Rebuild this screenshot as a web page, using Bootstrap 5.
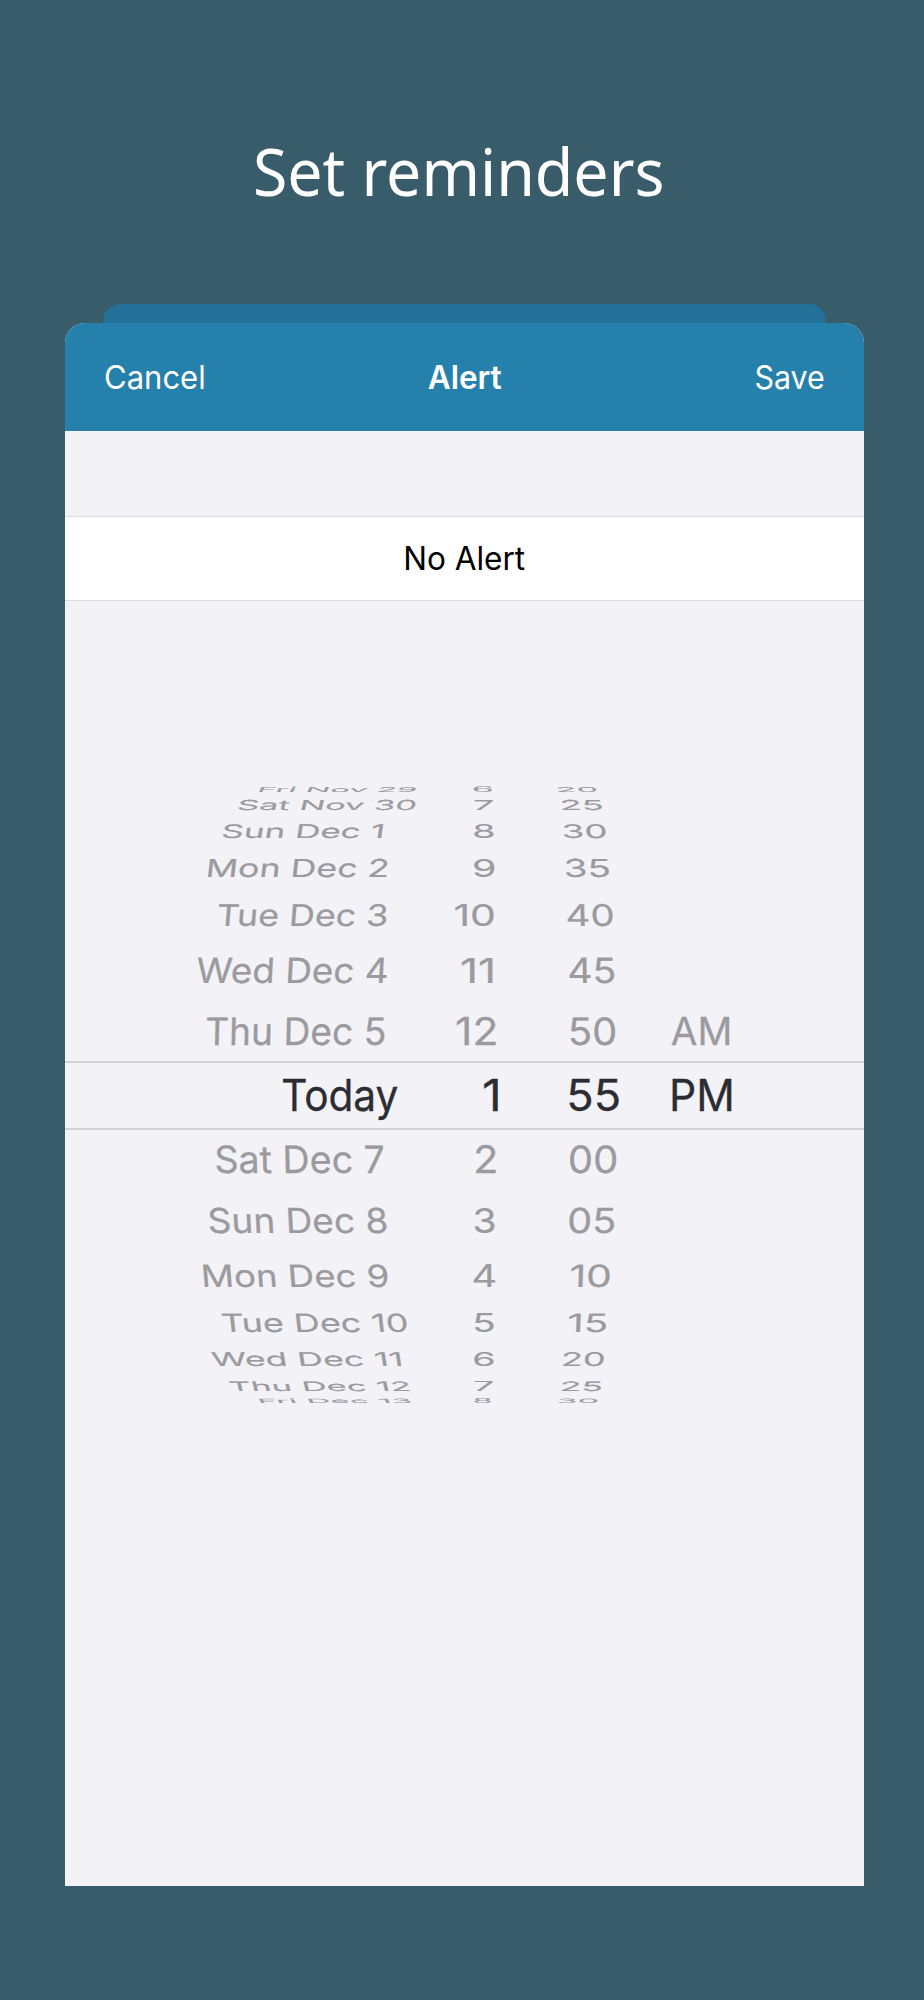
<!DOCTYPE html>
<html lang="en">
<head>
<meta charset="utf-8">
<meta name="viewport" content="width=device-width, initial-scale=1">
<title>Set reminders</title>
<link rel="stylesheet" href="https://cdn.jsdelivr.net/npm/bootstrap@5.3.0/dist/css/bootstrap.min.css">
<style>
  body { background: #385c69; font-family: Inter, "Liberation Sans", sans-serif; height: 2000px; overflow: hidden; }
  .hero { font: 400 66px/80px "Noto Sans", "Open Sans", sans-serif; height: 304px; padding-top: 130px; padding-right: 6px; }
  .phone { width: 799px; margin-left: 65px; }
  .back-sheet { height: 19px; margin: 0 38px; background: #237098; border-radius: 17px 17px 0 0; }
  .sheet { height: 1563px; background: #f2f2f7; border-radius: 20px 20px 0 0; overflow: hidden; }
  .sheet-bar { height: 108px; padding: 0 40px; background: #2580ac; font-size: 32px; line-height: 109px; }
  .sheet-bar > * { flex: 1 1 0; }
  .option { margin-top: 85px; height: 85px; border: solid #dcdcdf; border-width: 1px 0; font-size: 32px; line-height: 84px; color: #000; }
  .fit { display: inline-block; white-space: pre; }
  .wheel { padding-top: 182px; color: #9b9a9f; -webkit-text-stroke: .3px currentColor; }
  .wheel-row { grid-template-columns: 372px 96px 110px 1fr; }
  .wheel-row > div { min-width: 0; }
  .wheel-row span { display: block; width: max-content; font-size: 44px; line-height: 44px; transform-origin: 0 0; white-space: pre; }
  .wheel-row.picked { color: #2c2c32; border: solid #d0d0d5; border-width: 2px 0; }
</style>
</head>
<body>
<h1 class="hero text-white text-center m-0"><span class="fit" data-ink="406.3">Set reminders</span></h1>
<main class="phone">
  <div class="back-sheet"></div>
  <section class="sheet">
    <header class="sheet-bar d-flex text-white">
      <div class="text-start"><span class="fit" data-ink="99" data-edge="left">Cancel</span></div>
      <div class="text-center fw-semibold"><span class="fit" data-ink="73.6">Alert</span></div>
      <div class="text-end"><span class="fit" data-ink="68.7" data-edge="right">Save</span></div>
    </header>
    <div class="option bg-white text-center"><span class="fit" data-ink="119.5">No Alert</span></div>
    <div class="wheel" id="wheel"></div>
  </section>
</main>
<script src="https://cdn.jsdelivr.net/npm/bootstrap@5.3.0/dist/js/bootstrap.bundle.min.js"></script>
<script>
const pen = document.createElement('canvas').getContext('2d');
function ink(el) {
  const s = getComputedStyle(el);
  pen.font = `${s.fontWeight} ${s.fontSize} ${s.fontFamily}`;
  const m = pen.measureText(el.textContent);
  return { left: -m.actualBoundingBoxLeft, right: m.actualBoundingBoxRight, advance: m.width };
}
// Scale labels horizontally so their glyphs span the given width.
document.querySelectorAll('.fit').forEach(el => {
  const m = ink(el), s = el.dataset.ink / (m.right - m.left), edge = el.dataset.edge;
  el.style.transformOrigin = edge ? edge + ' center' : 'center';
  const dx = edge === 'left' ? -m.left * s : edge === 'right' ? (m.advance - m.right) * s
    : (m.advance / 2 - (m.left + m.right) / 2) * s;
  el.style.transform = `translateX(${dx}px) scaleX(${s})`;
});
// Wheel rows: height, cap top, baseline, lean, then [label, left, right] per column.
const rows = [
  [14, 4, 9, .5, ['Fri Nov 29', 259.7, 415.7], ['6', 473.3, 492], ['20', 558, 596.6]],
  [21, 3, 13, .24, ['Sat Nov 30', 239, 415.7], ['7', 474.7, 492.7], ['25', 562, 602.3]],
  [31, 6.3, 20, .16, ['Sun Dec 1', 223.3, 382.7], ['8', 474, 493.7], ['30', 563.3, 606]],
  [42, 10.2, 28.2, .11, ['Mon Dec 2', 208.4, 387.3], ['9', 473.7, 494.3], ['35', 565.3, 609.3]],
  [51, 13.2, 35, .08, ['Tue Dec 3', 218.3, 386.7], ['10', 455.3, 494.3], ['40', 567.3, 613]],
  [58, 15.5, 40.7, .055, ['Wed Dec 4', 197.3, 386.7], ['11', 462, 493.3], ['45', 569, 614.7]],
  [61, 17.5, 45, .025, ['Thu Dec 5', 206.7, 385], ['12', 457, 495.7], ['50', 570.7, 615.7], ['AM', 671.7, 729]],
  [69, 16.2, 48, 0, ['Today', 283, 397.7], ['1', 484.3, 498.7], ['55', 569.3, 619.3], ['PM', 672, 731.3]],
  [60, 16, 43.4, -.025, ['Sat Dec 7', 216, 383.3], ['2', 476, 495.7], ['00', 569.7, 616.7]],
  [58, 18.2, 43.3, -.055, ['Sun Dec 8', 209.3, 386.3], ['3', 474.3, 494.7], ['05', 569, 614.7]],
  [51, 16.7, 39, -.08, ['Mon Dec 9', 203.3, 387.3], ['4', 473.3, 495], ['10', 571.3, 610.3]],
  [42, 14.5, 32.8, -.11, ['Tue Dec 10', 222.6, 407], ['5', 475, 494.3], ['15', 569.3, 606.7]],
  [31, 11.5, 25.3, -.16, ['Wed Dec 11', 212.2, 400.7], ['6', 474, 493.7], ['20', 563.3, 604.3]],
  [22, 9.2, 18.6, -.24, ['Thu Dec 12', 230.2, 409], ['7', 474.7, 492.7], ['25', 562, 601.7]],
  [11, 4.7, 9, -.5, ['Fri Dec 13', 259.6, 410.3], ['8', 474, 491], ['30', 558, 597.7]]
];
const columns = [65, 437, 533, 643], leanShare = [1, 0, -.35, 0], cap = 32, baseline = 38;
const wheel = document.getElementById('wheel');
rows.forEach(([height, top, base, lean, ...cells]) => {
  const row = document.createElement('div');
  row.className = 'wheel-row d-grid' + (lean === 0 ? ' picked' : '');
  row.style.height = height + 'px';
  cells.forEach(([label, x0, x1], i) => {
    const cell = document.createElement('div'), text = document.createElement('span');
    text.textContent = label;
    cell.append(text); row.append(cell);
    wheel.append(row);
    const m = ink(text), sx = (x1 - x0) / (m.right - m.left), sy = (base - top) / cap;
    const shear = -lean * leanShare[i] * sy;
    const dx = x0 - columns[i] - sx * m.left - shear * (baseline - cap / 2);
    text.style.transform = `matrix(${sx},0,${shear},${sy},${dx},${base - sy * baseline})`;
  });
});
</script>
</body>
</html>
